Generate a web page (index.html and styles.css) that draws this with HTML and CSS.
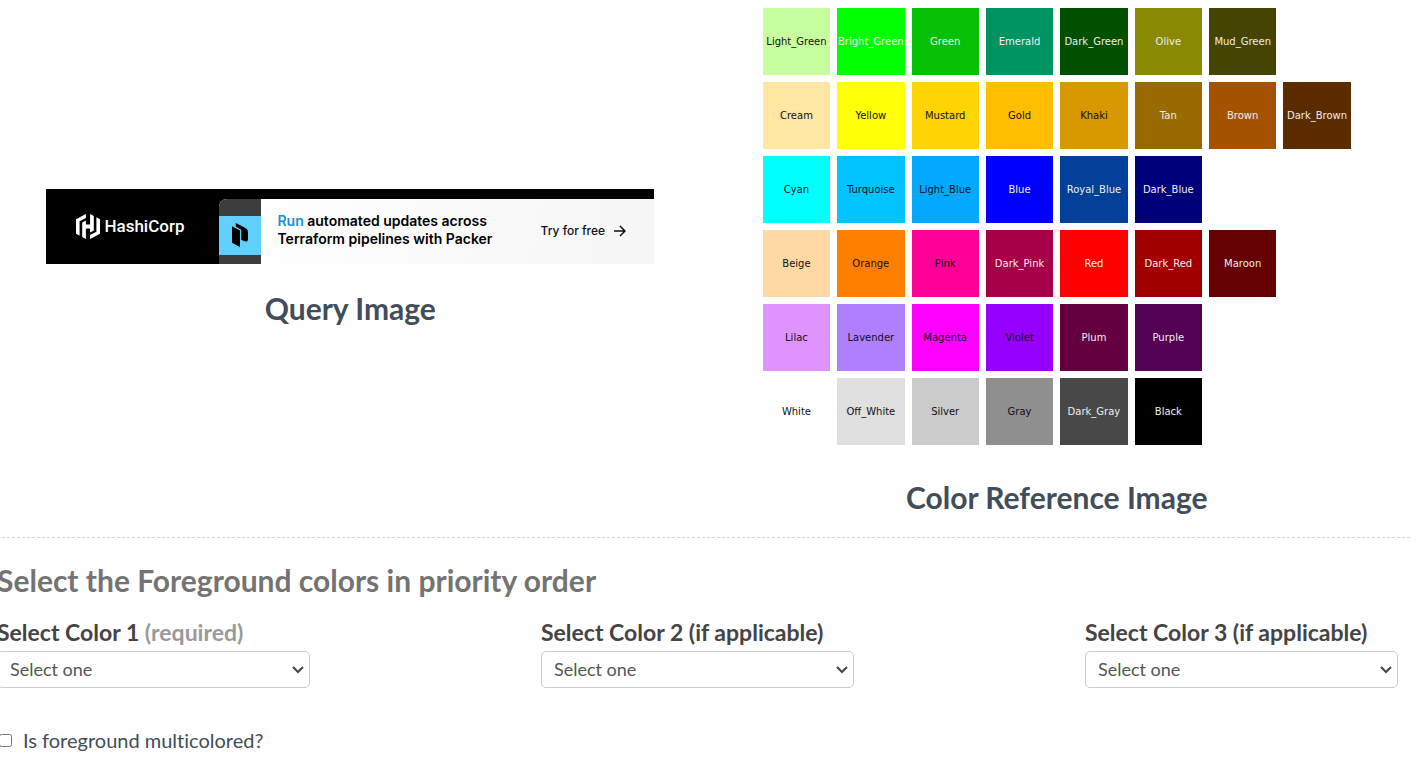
FILE: index.html
```html
<!DOCTYPE html>
<html lang="en">
<head>
<meta charset="utf-8">
<title>Color labeling</title>
<link rel="stylesheet" href="styles.css">
</head>
<body>
<main class="page">
  <section class="images">
    <figure class="figure figure-query">
      <div class="banner">
        <div class="brand">
          <svg class="brand-logo" viewBox="0 0 24 25" aria-hidden="true">
            <path d="M9.900 0 0 5.300v14.400l3.600 2V7.200l6.300-3.300zM14.100 25l9.900-5.300V5.300l-3.600-2v14.500l-6.300 3.300z"/>
            <path d="M14.100 0v10.500H9.900v-4L6.200 8.400V23l3.700 2V14.500h4.200v4l3.700-1.900V2z"/>
          </svg>
          <span>HashiCorp</span>
        </div>
        <div class="promo">
          <div class="promo-strip">
            <div class="promo-tile">
              <svg class="packer" viewBox="0 0 16 24" aria-hidden="true">
                <path d="M0 3.200l8 4.300V24l-8-4.300zM3.800 0l9.700 5c1.500.8 2.500 2.300 2.500 4v7.500c0 1.800-1.500 2.500-3.500 1.700l-3.300-1.500V6.800L3.800 3.600z"/>
              </svg>
            </div>
          </div>
          <p class="promo-text"><span class="accent">Run</span> automated updates across<br>Terraform pipelines with Packer</p>
          <a class="promo-link" href="#">Try for free
            <svg class="arrow" viewBox="0 0 12 12" aria-hidden="true"><path d="M0 6h11M6 1l5 5-5 5"/></svg>
          </a>
        </div>
      </div>
      <figcaption class="caption">Query Image</figcaption>
    </figure>
    <figure class="figure">
      <div class="swatches" id="swatches"></div>
      <figcaption class="caption caption-wide">Color Reference Image</figcaption>
    </figure>
  </section>
  <form class="form">
    <h2 class="title">Select the Foreground colors in priority order</h2>
    <div class="fields">
      <div class="field">
        <label for="c1">Select Color 1 <span class="hint">(required)</span></label>
        <div class="select">
          <select id="c1"><option>Select one</option></select>
          <svg class="chevron" viewBox="0 0 12 8" aria-hidden="true"><path d="M1 1l5 5 5-5"/></svg>
        </div>
      </div>
      <div class="field">
        <label for="c2">Select Color 2 (if applicable)</label>
        <div class="select">
          <select id="c2"><option>Select one</option></select>
          <svg class="chevron" viewBox="0 0 12 8" aria-hidden="true"><path d="M1 1l5 5 5-5"/></svg>
        </div>
      </div>
      <div class="field">
        <label for="c3">Select Color 3 (if applicable)</label>
        <div class="select">
          <select id="c3"><option>Select one</option></select>
          <svg class="chevron" viewBox="0 0 12 8" aria-hidden="true"><path d="M1 1l5 5 5-5"/></svg>
        </div>
      </div>
    </div>
    <div class="check">
      <input type="checkbox" id="multi">
      <label for="multi">Is foreground multicolored?</label>
    </div>
  </form>
</main>
<script src="swatches.js"></script>
</body>
</html>
```
FILE: styles.css
```css
* { box-sizing: border-box; }
body {
  margin: 0;
  background: #fff;
  color: #444;
  font-family: Lato, sans-serif;
  font-variant-ligatures: none;
  overflow-x: hidden;
}
.page { margin: 0 12px 0 -3px; }
.images {
  display: grid;
  grid-template-columns: 1fr 1fr;
  align-items: center;
  padding: 8px 0 20px;
  border-bottom: 1px dashed #d8d8d8;
}
.figure {
  margin: 0;
  display: flex;
  flex-direction: column;
  align-items: center;
}
.figure-query { padding-bottom: 9px; }
.caption {
  margin-top: 24px;
  font-size: 30px;
  line-height: 40px;
  font-weight: 700;
  color: #414d58;
}
.caption-wide { margin-top: 32px; }

.banner {
  width: 86%;
  height: 75px;
  display: flex;
  background: #000;
  color: #000;
}
.brand {
  width: 173px;
  padding-left: 30px;
  display: flex;
  align-items: center;
  gap: 4px;
  color: #fff;
  font: 500 17px Roboto, sans-serif;
}
.brand-logo { width: 24px; height: 25px; fill: #fff; }
.promo {
  flex: 1;
  margin-top: 10px;
  display: flex;
  align-items: center;
  border-radius: 8px 0 0 0;
  overflow: hidden;
  background: linear-gradient(100deg, #fff, #f6f6f6);
}
.promo-strip {
  width: 42px;
  height: 100%;
  padding-top: 17px;
  background: #3b3c3d;
}
.promo-tile {
  height: 39px;
  display: flex;
  align-items: center;
  justify-content: center;
  background: #62d0ff;
}
.packer { width: 16px; height: 24px; }
.promo-text {
  margin: 0 0 3px 16px;
  font: 600 14px/18px Inter, sans-serif;
}
.accent { color: #1193d6; }
.promo-link {
  margin: 0 28px 0 auto;
  display: flex;
  align-items: center;
  gap: 9px;
  font: 500 12px/18px Inter, sans-serif;
  color: #111;
  text-decoration: none;
}
.arrow { width: 12px; height: 12px; fill: none; stroke: #111; stroke-width: 1.500; }

.swatches { width: 588px; display: grid; gap: 7px; }
.swatch-row {
  display: grid;
  grid-template-columns: repeat(8, 1fr);
  gap: 7px;
}
.swatch {
  height: 67px;
  display: flex;
  align-items: center;
  justify-content: center;
  font: 10px "DejaVu Sans", sans-serif;
  color: #111;
}
.light { color: #eee; }

.title {
  margin: 22px 0 0;
  font-size: 30px;
  line-height: 40px;
  font-weight: 700;
  color: #737373;
}
.fields {
  display: flex;
  justify-content: space-between;
  margin: 16px 12px 0 0;
}
.field { width: 313px; display: flex; flex-direction: column; }
.field label {
  font-size: 23px;
  line-height: 32px;
  font-weight: 700;
  white-space: nowrap;
}
.hint { color: #999; }
.select { position: relative; margin-top: 3px; }
.select select {
  display: block;
  width: 100%;
  height: 37px;
  padding: 0 12px 1px;
  border: 1px solid #ccc;
  border-radius: 5px;
  background: #fff;
  color: #555;
  font: 18px Lato, sans-serif;
  font-variant-ligatures: none;
  appearance: none;
}
.chevron {
  position: absolute;
  right: 6px;
  top: 15px;
  width: 12px;
  height: 8px;
  fill: none;
  stroke: #444;
  stroke-width: 2;
  pointer-events: none;
}
.check {
  display: flex;
  align-items: center;
  gap: 11px;
  margin: 39px 0 0 2px;
  font-size: 20px;
  line-height: 26px;
  color: #414d58;
}
.check input { width: 13px; height: 13px; margin: 0; }
```
FILE: swatches.js
```js
// Each row lists "name fill"; an asterisk marks swatches with a light label.
const rows = [
  ["Light_Green c8ff9e", "Bright_Green 00ff00 *", "Green 05c005 *", "Emerald 009463 *", "Dark_Green 005000 *", "Olive 898903 *", "Mud_Green 454503 *"],
  ["Cream ffe7a3", "Yellow ffff07", "Mustard ffd403", "Gold ffbf00", "Khaki d89800", "Tan 986b00 *", "Brown a55200 *", "Dark_Brown 5b2c00 *"],
  ["Cyan 00ffff", "Turquoise 00c3ff", "Light_Blue 03a8ff", "Blue 0000ff *", "Royal_Blue 004098 *", "Dark_Blue 000078 *"],
  ["Beige ffd9a5", "Orange ff8000", "Pink ff0096", "Dark_Pink a50048 *", "Red ff0000 *", "Dark_Red a00000 *", "Maroon 640000 *"],
  ["Lilac e092ff", "Lavender b07fff", "Magenta ff00ff", "Violet 9600ff", "Plum 640040 *", "Purple 540054 *"],
  ["White ffffff", "Off_White e0e0e0", "Silver cbcbcb", "Gray 8f8f8f", "Dark_Gray 484848 *", "Black 000000 *"]
];
const host = document.getElementById("swatches");
for (const row of rows) {
  const line = document.createElement("div");
  line.className = "swatch-row";
  for (const item of row) {
    const [name, fill, light] = item.split(" ");
    const cell = document.createElement("div");
    cell.className = light ? "swatch light" : "swatch";
    cell.style.backgroundColor = "#" + fill;
    cell.textContent = name;
    line.append(cell);
  }
  host.append(line);
}
```
